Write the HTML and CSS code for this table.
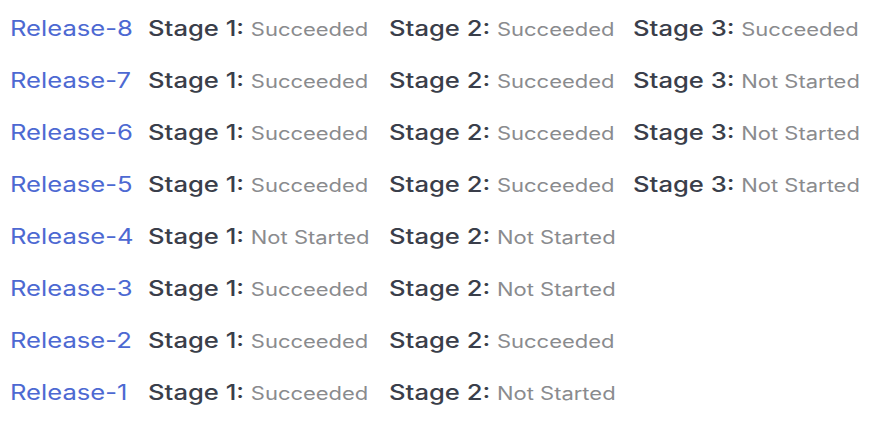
FILE: index.html
```html
<!DOCTYPE html>
<html>
<head>
<meta charset="utf-8">
<link rel="stylesheet" href="styles.css">
</head>
<body>
<div class="list">
  <div class="row"><span class="rel">Release-8</span><span class="st"><b>Stage 1:</b> <i>Succeeded</i></span><span class="st"><b>Stage 2:</b> <i>Succeeded</i></span><span class="st"><b>Stage 3:</b> <i>Succeeded</i></span></div>
  <div class="row"><span class="rel">Release-7</span><span class="st"><b>Stage 1:</b> <i>Succeeded</i></span><span class="st"><b>Stage 2:</b> <i>Succeeded</i></span><span class="st"><b>Stage 3:</b> <i>Not Started</i></span></div>
  <div class="row"><span class="rel">Release-6</span><span class="st"><b>Stage 1:</b> <i>Succeeded</i></span><span class="st"><b>Stage 2:</b> <i>Succeeded</i></span><span class="st"><b>Stage 3:</b> <i>Not Started</i></span></div>
  <div class="row"><span class="rel">Release-5</span><span class="st"><b>Stage 1:</b> <i>Succeeded</i></span><span class="st"><b>Stage 2:</b> <i>Succeeded</i></span><span class="st"><b>Stage 3:</b> <i>Not Started</i></span></div>
  <div class="row"><span class="rel">Release-4</span><span class="st"><b>Stage 1:</b> <i>Not Started</i></span><span class="st"><b>Stage 2:</b> <i>Not Started</i></span></div>
  <div class="row"><span class="rel">Release-3</span><span class="st"><b>Stage 1:</b> <i>Succeeded</i></span><span class="st"><b>Stage 2:</b> <i>Not Started</i></span></div>
  <div class="row"><span class="rel">Release-2</span><span class="st"><b>Stage 1:</b> <i>Succeeded</i></span><span class="st"><b>Stage 2:</b> <i>Succeeded</i></span></div>
  <div class="row"><span class="rel">Release-1</span><span class="st"><b>Stage 1:</b> <i>Succeeded</i></span><span class="st"><b>Stage 2:</b> <i>Not Started</i></span></div>
</div>
</body>
</html>
```
FILE: styles.css
```css
html, body {
  margin: 0;
  background: #fff;
}
body {
  font-family: Inter, "Noto Sans", sans-serif;
  padding: 2px 0 0 10px;
}
.list {
  display: flex;
  flex-direction: column;
}
.row {
  display: grid;
  grid-template-columns: 138px 241px 244px auto;
  justify-items: start;
  height: 52px;
  align-items: center;
  white-space: nowrap;
}
.rel,
.st {
  transform: scaleX(1.22);
  transform-origin: left center;
}
.rel {
  color: #4d69d2;
  font-size: 21px;
}
.st b {
  font-weight: 500;
  color: #3a3e4a;
  font-size: 21px;
  margin-right: 1px;
}
.st i {
  font-style: normal;
  color: #8a8b8e;
  font-size: 18px;
}
```
